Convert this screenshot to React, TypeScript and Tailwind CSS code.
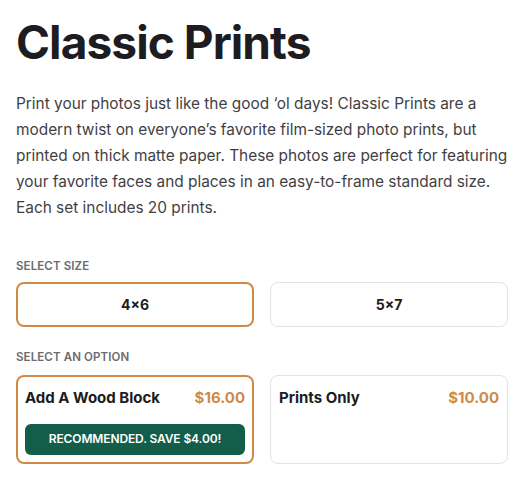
const sizes = ["4×6", "5×7"];

function Label({ children }: { children: string }) {
  return (
    <div className="text-[11.5px] font-semibold uppercase tracking-[0.01em] text-[#6b6b70]">
      {children}
    </div>
  );
}

export default function App() {
  return (
    <main className="min-h-screen bg-white px-4 pt-[14px] font-['Inter',sans-serif] text-[#1c1c21]">
      <h1 className="text-[46px] font-bold leading-[56px] tracking-[-0.02em]">Classic Prints</h1>

      <p className="mt-[21px] text-[15.4px] leading-[26px] text-[#3f3f44]">
        Print your photos just like the good ‘ol days! Classic Prints are a modern twist on
        everyone’s favorite film-sized photo prints, but printed on thick matte paper. These photos
        are perfect for featuring your favorite faces and places in an easy-to-frame standard size.
        Each set includes 20 prints.
      </p>

      <section className="mt-[37px]">
        <Label>Select size</Label>
        <div className="mt-[7px] grid grid-cols-2 gap-4">
          {sizes.map((s, i) => (
            <button
              key={s}
              className={
                i === 0
                  ? "flex h-[45px] items-center justify-center rounded-lg border-2 border-[#d08a45] text-[14px] font-bold"
                  : "flex h-[45px] items-center justify-center rounded-lg border border-[#e3e3e3] text-[14px] font-bold"
              }
            >
              {s}
            </button>
          ))}
        </div>
      </section>

      <section className="mt-[22px]">
        <Label>Select an option</Label>
        <div className="mt-[8px] grid grid-cols-2 gap-4">
          <div className="h-[89px] rounded-lg border-2 border-[#d08a45] px-[7px] pt-[8px]">
            <div className="flex items-center justify-between leading-[26px]">
              <span className="text-[15px] font-bold">Add A Wood Block</span>
              <span className="text-[15px] font-bold text-[#d08a45]">$16.00</span>
            </div>
            <div className="mt-[13px] flex h-[31px] items-center justify-center rounded-md bg-[#135e4b] text-[12px] font-semibold tracking-[-0.01em] text-white">
              RECOMMENDED. SAVE $4.00!
            </div>
          </div>
          <div className="h-[89px] rounded-lg border border-[#e3e3e3] px-[8px] pt-[9px]">
            <div className="flex items-center justify-between leading-[26px]">
              <span className="text-[15px] font-bold">Prints Only</span>
              <span className="text-[15px] font-bold text-[#d08a45]">$10.00</span>
            </div>
          </div>
        </div>
      </section>
    </main>
  );
}
